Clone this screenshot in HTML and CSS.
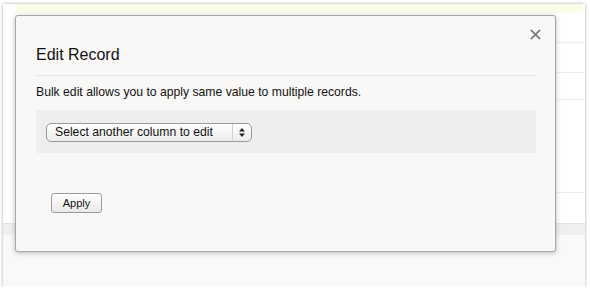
FILE: index.html
```html
<!DOCTYPE html>
<html lang="en">
<head>
  <meta charset="UTF-8">
  <title>Edit Record</title>
  <link rel="stylesheet" href="styles.css">
</head>
<body>
<div class="page">
  <!-- background list behind the dialog -->
  <div class="notice-bar"></div>
  <div class="row row-a"></div>
  <div class="row row-b"></div>
  <div class="row row-c"></div>
  <div class="row row-d"></div>
  <div class="footer-band"></div>
  <div class="footer"></div>

  <!-- Bulk edit dialog -->
  <div class="modal">
    <span class="modal-close">
      <svg width="11" height="11" viewBox="0 0 11 11">
        <path d="M1 1 L10 10 M10 1 L1 10" stroke="#6f6f6f" stroke-width="1.7" fill="none"/>
      </svg>
    </span>
    <h2 class="modal-title">Edit Record</h2>
    <p class="modal-text">Bulk edit allows you to apply same value to multiple records.</p>
    <div class="field-box">
      <div class="select-wrap">
        <select class="column-select">
          <option>Select another column to edit</option>
        </select>
        <span class="select-arrows">
          <svg width="6" height="9" viewBox="0 0 6 9">
            <path d="M0 3.5 L3 0 L6 3.5 Z M0 5.5 L6 5.5 L3 9 Z" fill="#222"/>
          </svg>
        </span>
      </div>
    </div>
    <button class="apply-btn">Apply</button>
  </div>
</div>
</body>
</html>
```

FILE: styles.css
```css
body {
  margin: 0;
  padding: 3px 5px 0 3px;
  background: #fff;
  font-family: 'Liberation Sans', Arial, sans-serif;
}

.page {
  position: relative;
  height: 283px;
  background: #fff;
  box-shadow: 0 0 3px rgba(0,0,0,0.35);
}

.notice-bar {
  margin: 1px 2px 0 12px;
  height: 9px;
  background: #fbfbea;
}

.row {
  margin-left: 12px;
  border-bottom: 1px solid #ededed;
}

.row-a { height: 29px; }
.row-b { height: 29px; }
.row-c { height: 26px; }
.row-d { height: 92px; }

.footer-band {
  margin-top: 30px;
  height: 11px;
  background: #efefef;
  border-top: 1px solid #e2e2e2;
}

.footer {
  height: 51px;
  background: #faf9f7;
}

.modal {
  position: absolute;
  left: 12px;
  top: 11px;
  width: 541px;
  height: 237px;
  box-sizing: border-box;
  padding: 29px 19px 0 20px;
  background: #f9f8f6;
  border: 1px solid #a8a8a8;
  border-radius: 3px;
  box-shadow: 0 1px 5px rgba(0,0,0,0.25);
}

.modal-close {
  position: absolute;
  right: 14px;
  top: 13px;
  display: flex;
  cursor: pointer;
}

.modal-title {
  margin: 0;
  padding-bottom: 10px;
  border-bottom: 1px solid #e6e5e3;
  font-size: 16px;
  font-weight: normal;
  line-height: 20px;
  color: #111;
}

.modal-text {
  margin: 9px 0 10px;
  font-size: 12.2px;
  line-height: 15px;
  color: #111;
}

.field-box {
  height: 43px;
  box-sizing: border-box;
  padding: 12px 10px;
  background: #efeeec;
}

.select-wrap {
  display: inline-flex;
  width: 206px;
  height: 19px;
  box-sizing: border-box;
  border: 1px solid #9a9a9a;
  border-radius: 5px;
  background: linear-gradient(#ffffff, #ececec);
}

.column-select {
  flex: 1;
  appearance: none;
  -webkit-appearance: none;
  border: none;
  background: transparent;
  padding: 0 0 0 8px;
  margin: 0;
  font-family: 'Liberation Sans', Arial, sans-serif;
  font-size: 12.2px;
  color: #111;
  outline: none;
}

.select-arrows {
  width: 18px;
  display: flex;
  align-items: center;
  justify-content: center;
  border-left: 1px solid #d0d0d0;
}

.apply-btn {
  margin: 40px 0 0 15px;
  width: 51px;
  height: 20px;
  padding: 0;
  border: 1px solid #9c9c9c;
  border-radius: 3px;
  background: linear-gradient(#ffffff, #e9e9e9);
  font-family: 'Liberation Sans', Arial, sans-serif;
  font-size: 11px;
  color: #111;
  cursor: pointer;
}
```
